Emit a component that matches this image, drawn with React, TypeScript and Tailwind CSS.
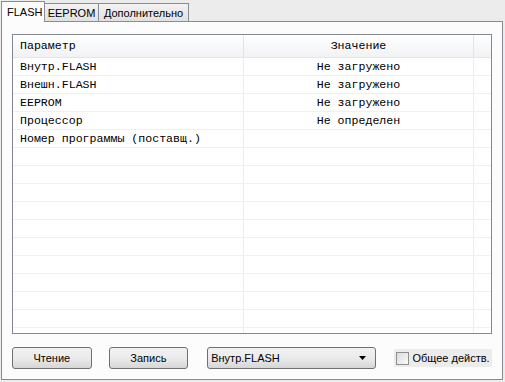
const rows: [string, string][] = [
  ["Внутр.FLASH", "Не загружено"],
  ["Внешн.FLASH", "Не загружено"],
  ["EEPROM", "Не загружено"],
  ["Процессор", "Не определен"],
  ["Номер программы (поставщ.)", ""],
];

const filler = Array.from({ length: 11 }, () => ["", ""] as [string, string]);

function Tab({ label, width, active }: { label: string; width: string; active?: boolean }) {
  if (active) {
    return (
      <div className={`relative z-10 -mb-px h-[21px] whitespace-nowrap border border-b-0 border-[#898c95] bg-[#fcfcfc] pl-[5px] pt-[3px] text-[11px] leading-[14px] text-black ${width}`}>
        {label}
      </div>
    );
  }
  return (
    <div className={`-ml-px flex h-[18px] justify-center whitespace-nowrap border border-b-0 border-[#898c95] bg-gradient-to-b from-[#f2f2f2] to-[#e1e1e1] pt-[2px] text-[11px] leading-[14px] text-black ${width}`}>
      {label}
    </div>
  );
}

function Button({ label }: { label: string }) {
  return (
    <div className="flex h-[22px] w-[80px] items-center justify-center rounded-[3px] border border-[#707070] bg-gradient-to-b from-[#f2f2f2] via-[#ebebeb] to-[#d6d6d6] text-[11px] text-black">
      {label}
    </div>
  );
}

export default function App() {
  return (
    <div className="flex h-[382px] w-[505px] flex-col bg-[#ececec] pb-[2px] pl-px pr-[2px] font-['Liberation_Sans',sans-serif]">
      <div className="flex h-[21px] items-end">
        <Tab label="FLASH" width="w-[44px]" active />
        <Tab label="EEPROM" width="w-[55px]" />
        <Tab label="Дополнительно" width="w-[91px]" />
      </div>
      <div className="flex flex-1 flex-col border border-[#898c95] bg-[#fcfcfc] px-[10px] pt-[12px]">
        <div className="h-[300px] overflow-hidden border border-[#828790] bg-white font-['Liberation_Mono',monospace] text-[11.6px] text-black">
          <div className="flex h-[23px] border-b border-[#e5e5e5] bg-gradient-to-b from-white to-[#f1f2f4]">
            <div className="flex w-[231px] items-center border-r border-[#e3e3e3] pl-[7px]">Параметр</div>
            <div className="flex w-[230px] items-center justify-center border-r border-[#e3e3e3]">Значение</div>
            <div className="flex-1" />
          </div>
          {[...rows, ...filler].map(([p, v], i) => (
            <div key={i} className="flex h-[18px] border-b border-[#f0f0f0]">
              <div className="flex w-[231px] items-center whitespace-nowrap border-r border-[#ececec] pl-[7px]">{p}</div>
              <div className="flex w-[230px] items-center justify-center whitespace-nowrap border-r border-[#ececec]">{v}</div>
              <div className="flex-1" />
            </div>
          ))}
        </div>
        <div className="mt-[13px] flex items-center">
          <Button label="Чтение" />
          <div className="w-[17px]" />
          <Button label="Запись" />
          <div className="relative ml-[19px] flex h-[22px] w-[170px] items-center rounded-[3px] border border-[#707070] bg-gradient-to-b from-[#f2f2f2] via-[#ebebeb] to-[#d6d6d6] pl-[3px] text-[11px] text-black">
            Внутр.FLASH
            <svg className="absolute right-[9px] top-[8px]" width="7" height="4" viewBox="0 0 7 4">
              <path d="M0 0H7L3.5 4Z" fill="#000" />
            </svg>
          </div>
          <div className="ml-[18px] flex h-[18px] w-[98px] items-center whitespace-nowrap bg-[#ececec] pl-[2px] text-[11px] text-black">
            <div className="mr-[3px] h-[13px] w-[13px] shrink-0 border border-[#8f8f8f] bg-gradient-to-br from-[#dcdcdc] to-[#fafafa]" />
            Общее действ.
          </div>
        </div>
      </div>
    </div>
  );
}
